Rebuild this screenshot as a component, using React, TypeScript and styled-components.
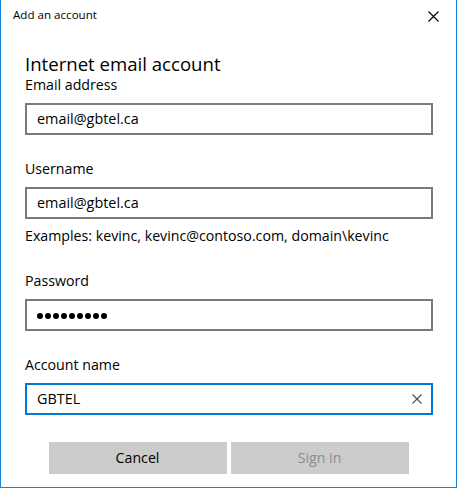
import React from 'react';
import styled, { createGlobalStyle } from 'styled-components';

const GlobalStyle = createGlobalStyle`
  html, body {
    margin: 0;
    padding: 0;
    background: #ffffff;
  }
  body {
    font-family: "Segoe UI", "Open Sans", "Noto Sans", sans-serif;
    color: #000000;
  }
`;

const Window = styled.div`
  box-sizing: border-box;
  width: 457px;
  height: 488px;
  border: 1px solid #1883d7;
  border-top: none;
  background: #ffffff;
  display: flex;
  flex-direction: column;
`;

const TitleBar = styled.div`
  height: 32px;
  display: flex;
  align-items: flex-start;
  justify-content: space-between;
`;

const TitleText = styled.span`
  font-size: 11.6px;
  line-height: 16px;
  padding: 7px 0 0 12px;
`;

const CloseButton = styled.div`
  width: 46px;
  height: 32px;
  display: flex;
  align-items: center;
  justify-content: center;
`;

const Content = styled.div`
  display: flex;
  flex-direction: column;
  padding: 20px 22px 0 24px;
`;

const Heading = styled.h1`
  margin: 0;
  font-size: 18.6px;
  font-weight: 400;
  line-height: 23px;
`;

const Label = styled.div<{ $gap?: number }>`
  font-size: 14.2px;
  line-height: 20px;
  margin-top: ${({ $gap }) => $gap ?? 0}px;
`;

const Field = styled.div<{ $focused?: boolean }>`
  box-sizing: border-box;
  width: 408px;
  height: 32px;
  margin-top: 8px;
  border: 2px solid ${({ $focused }) => ($focused ? '#0078d7' : '#7a7a7a')};
  padding: 0 10px;
  display: flex;
  align-items: center;
  justify-content: space-between;
  font-size: 14.4px;
  line-height: 28px;
`;

const Hint = styled.div`
  font-size: 14.2px;
  line-height: 20px;
  margin-top: 7px;
`;

const Dots = styled.div`
  display: flex;
  gap: 2px;
  margin-top: 1px;
`;

const Dot = styled.span`
  width: 6px;
  height: 6px;
  border-radius: 50%;
  background: #000000;
`;

const ClearIcon = styled.span`
  display: block;
  margin-right: -1px;
  line-height: 0;
`;

const Buttons = styled.div`
  display: flex;
  justify-content: center;
  gap: 4px;
  margin-top: 27px;
  padding-right: 2px;
`;

const Button = styled.div<{ $disabled?: boolean }>`
  width: 178px;
  height: 32px;
  background: #cccccc;
  display: flex;
  align-items: center;
  justify-content: center;
  font-size: 14.2px;
  line-height: 20px;
  color: ${({ $disabled }) => ($disabled ? '#8c8c8c' : '#000000')};
`;

const Cross = ({ size, color }: { size: number; color: string }) => (
  <svg width={size} height={size} viewBox={`0 0 ${size} ${size}`} style={{ display: 'block' }}>
    <path
      d={`M0.5 0.5 L${size - 0.5} ${size - 0.5} M${size - 0.5} 0.5 L0.5 ${size - 0.5}`}
      stroke={color}
      strokeWidth="1.1"
      fill="none"
    />
  </svg>
);

export default function App() {
  return (
    <>
      <GlobalStyle />
      <Window>
        <TitleBar>
          <TitleText>Add an account</TitleText>
          <CloseButton>
            <Cross size={11} color="#000000" />
          </CloseButton>
        </TitleBar>
        <Content>
          <Heading>Internet email account</Heading>
          <Label>Email address</Label>
          <Field>email@gbtel.ca</Field>
          <Label $gap={24}>Username</Label>
          <Field>email@gbtel.ca</Field>
          <Hint>Examples: kevinc, kevinc@contoso.com, domain\kevinc</Hint>
          <Label $gap={25}>Password</Label>
          <Field>
            <Dots>
              {Array.from({ length: 9 }).map((_, i) => (
                <Dot key={i} />
              ))}
            </Dots>
          </Field>
          <Label $gap={24}>Account name</Label>
          <Field $focused>
            GBTEL
            <ClearIcon>
              <Cross size={10} color="#4d4d4d" />
            </ClearIcon>
          </Field>
          <Buttons>
            <Button>Cancel</Button>
            <Button $disabled>Sign in</Button>
          </Buttons>
        </Content>
      </Window>
    </>
  );
}
